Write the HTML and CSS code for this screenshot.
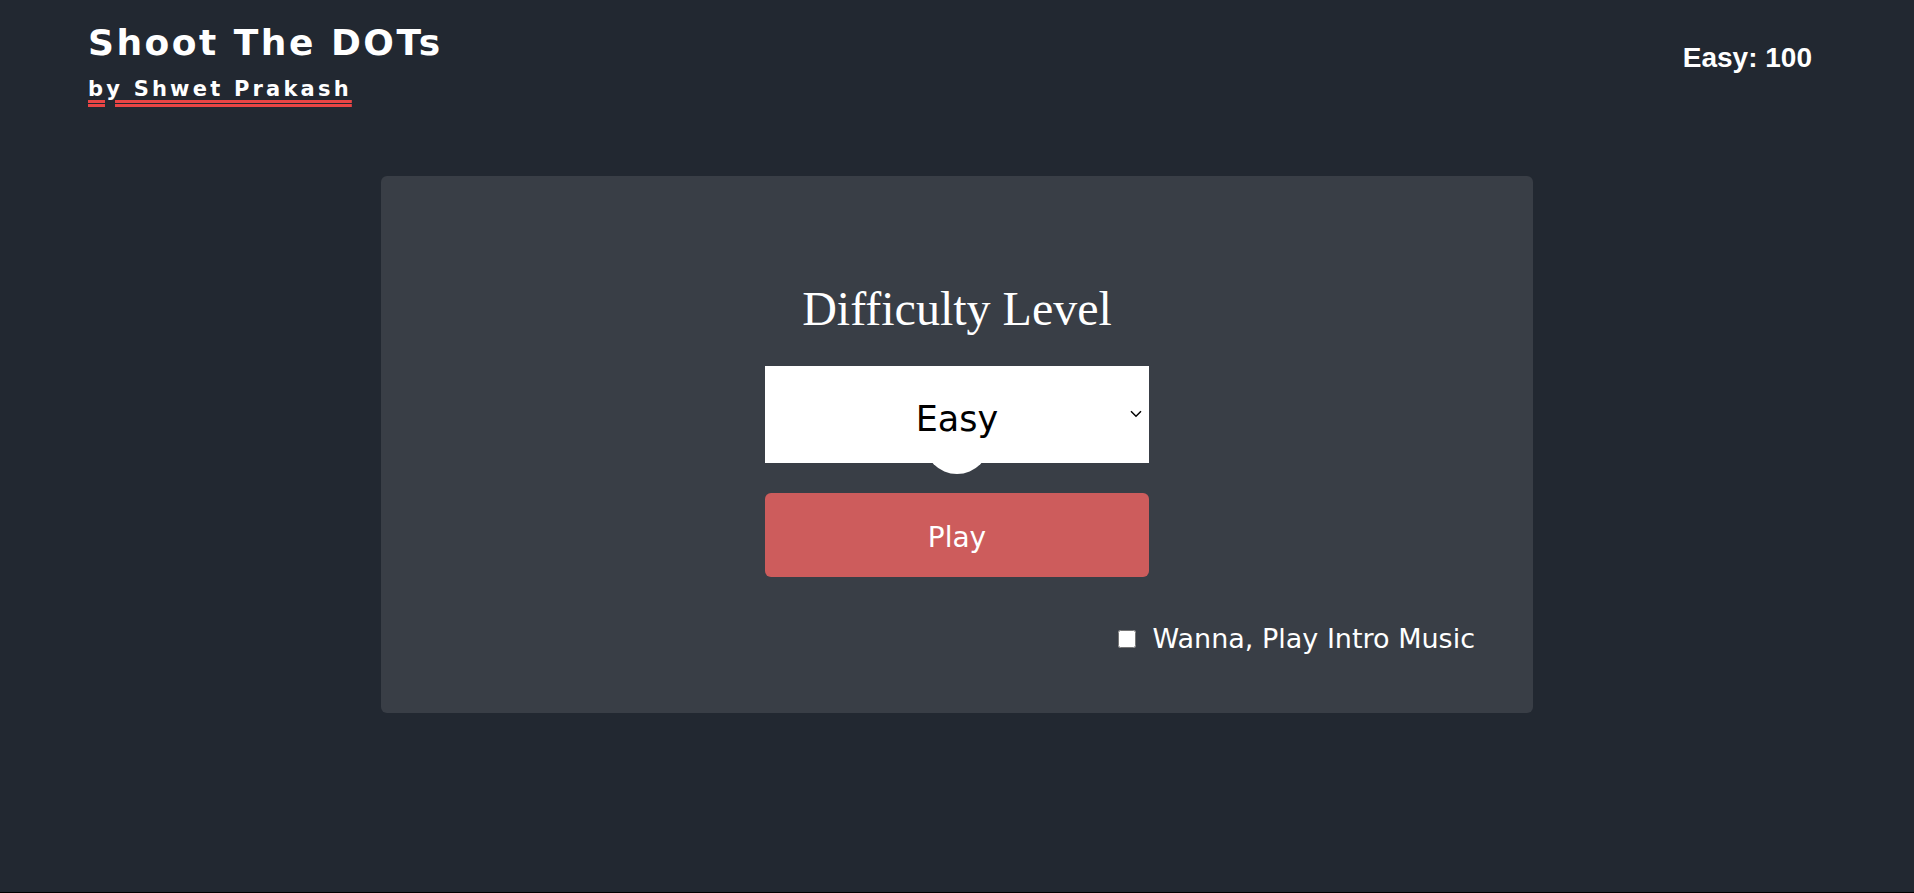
FILE: index.html
```html
<!DOCTYPE html>
<html lang="en">
<head>
<meta charset="utf-8">
<title>Shoot The DOTs</title>
<link rel="stylesheet" href="styles.css">
</head>
<body>
  <header class="topbar">
    <div class="brand">
      <h1 class="title">Shoot The DOTs</h1>
      <p class="author">by Shwet Prakash</p>
    </div>
    <div class="score">Easy: 100</div>
  </header>

  <main class="panel">
    <div class="dot"></div>
    <h2 class="heading">Difficulty Level</h2>
    <div class="select-wrap">
      <select class="level">
        <option>Easy</option>
        <option>Medium</option>
        <option>Hard</option>
      </select>
      <svg class="chevron" width="12" height="8" viewBox="0 0 12 8" aria-hidden="true">
        <path d="M1 1.2 L6 6.2 L11 1.2" fill="none" stroke="#000" stroke-width="1.5"/>
      </svg>
    </div>
    <button class="play">Play</button>
    <label class="music">
      <input type="checkbox" class="music-box">
      <span>Wanna, Play Intro Music</span>
    </label>
  </main>
</body>
</html>
```

FILE: styles.css
```css
html {
  background: #000;
}

body {
  margin: 0;
  min-height: calc(100vh - 1px);
  background: #222831;
  color: #fff;
  font-family: "Comic Sans MS", "DejaVu Sans", sans-serif;
}

.topbar {
  display: flex;
  justify-content: space-between;
  align-items: flex-start;
  padding: 22px 102px 0 88px;
}

.title {
  margin: 0;
  font-family: "Comic Sans MS", "DejaVu Sans", sans-serif;
  font-weight: bold;
  font-size: 36px;
  letter-spacing: 2.5px;
  line-height: 42px;
  color: #fff;
}

.author {
  margin: 13px 0 0;
  font-family: "Verdana", "DejaVu Sans", sans-serif;
  font-weight: bold;
  font-size: 21px;
  letter-spacing: 3.2px;
  line-height: 24px;
  text-decoration: underline double #e84545;
  text-decoration-thickness: 3px;
  text-underline-offset: 4px;
  text-decoration-skip-ink: auto;
}

.score {
  margin-top: 20px;
  font-family: "Liberation Sans", Arial, sans-serif;
  font-weight: bold;
  font-size: 28px;
  line-height: 32px;
}

.panel {
  position: relative;
  width: 1152px;
  box-sizing: border-box;
  margin: 75px auto 0;
  padding: 106px 58px 58px;
  background: #393e46;
  border-radius: 6px;
  display: flex;
  flex-direction: column;
  align-items: center;
}

.dot {
  position: absolute;
  left: 543px;
  top: 232px;
  width: 66px;
  height: 66px;
  border-radius: 50%;
  background: #fff;
}

.heading {
  margin: 0;
  font-family: "Liberation Serif", "Times New Roman", serif;
  font-weight: normal;
  font-size: 48px;
  line-height: 53px;
  color: #fff;
}

.select-wrap {
  position: relative;
  margin-top: 31px;
  width: 384px;
  height: 97px;
}

.level {
  width: 100%;
  height: 100%;
  border: none;
  border-radius: 0;
  background: #fff;
  appearance: none;
  -webkit-appearance: none;
  font-family: "Comic Sans MS", "DejaVu Sans", sans-serif;
  font-size: 35px;
  color: #000;
  text-align: center;
  text-align-last: center;
  padding: 8px 0 0;
}

.chevron {
  position: absolute;
  right: 7px;
  top: 44px;
}

.play {
  margin-top: 30px;
  width: 384px;
  height: 84px;
  border: none;
  border-radius: 6px;
  background: #cd5c5c;
  color: #fff;
  font-family: "Comic Sans MS", "DejaVu Sans", sans-serif;
  font-size: 28px;
  padding: 5px 0 0;
}

.music {
  align-self: flex-end;
  margin-top: 46px;
  display: flex;
  align-items: center;
  gap: 17px;
  font-family: "Comic Sans MS", "DejaVu Sans", sans-serif;
  font-size: 27px;
  line-height: 32px;
  color: #fff;
}

.music-box {
  margin: 0;
  width: 18px;
  height: 18px;
}
```
